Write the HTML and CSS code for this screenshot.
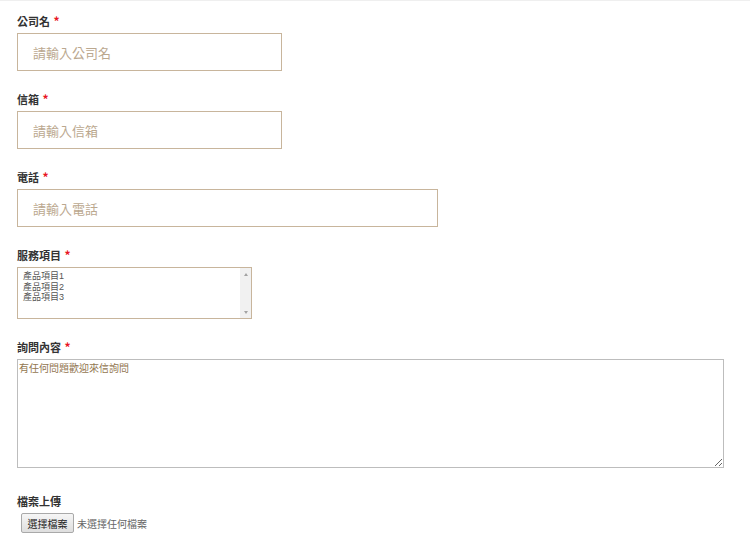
FILE: index.html
```html
<!DOCTYPE html>
<html lang="zh-Hant">
<head>
<meta charset="utf-8">
<title>聯絡表單</title>
<link rel="stylesheet" href="styles.css">
</head>
<body>
<form class="form">
  <div class="group">
    <label class="label">公司名 <span class="req">*</span></label>
    <input class="field field-sm" type="text" placeholder="請輸入公司名">
  </div>
  <div class="group">
    <label class="label">信箱 <span class="req">*</span></label>
    <input class="field field-sm" type="text" placeholder="請輸入信箱">
  </div>
  <div class="group">
    <label class="label">電話 <span class="req">*</span></label>
    <input class="field field-md" type="text" placeholder="請輸入電話">
  </div>
  <div class="group">
    <label class="label">服務項目 <span class="req">*</span></label>
    <div class="listbox">
      <ul class="options">
        <li>產品項目1</li>
        <li>產品項目2</li>
        <li>產品項目3</li>
      </ul>
      <div class="scrollbar">
        <span class="arrow arrow-up"></span>
        <span class="arrow arrow-down"></span>
      </div>
    </div>
  </div>
  <div class="group group-text">
    <label class="label">詢問內容 <span class="req">*</span></label>
    <textarea class="textarea">有任何問題歡迎來信詢問</textarea>
  </div>
  <div class="group">
    <label class="label">檔案上傳</label>
    <div class="file">
      <button type="button" class="file-btn">選擇檔案</button>
      <span class="file-name">未選擇任何檔案</span>
    </div>
  </div>
</form>
</body>
</html>
```

FILE: styles.css
```css
html, body {
  margin: 0;
  padding: 0;
  background: #fff;
}
body {
  border-top: 1px solid #efefef;
  font-family: "Liberation Sans", "Noto Sans CJK TC", sans-serif;
  color: #333;
}
.form {
  padding: 13px 17px 0 17px;
}
.group {
  margin-bottom: 21px;
}
.group-text {
  margin-bottom: 26px;
}
.label {
  display: block;
  font-size: 11px;
  font-weight: bold;
  line-height: 14px;
  height: 14px;
  margin-bottom: 5px;
  color: #333;
  font-family: "Noto Sans CJK TC", sans-serif;
}
.req {
  color: #e8171f;
  font-size: 12px;
  margin-left: 1px;
}
.field {
  display: block;
  box-sizing: border-box;
  height: 38px;
  border: 1px solid #c8b59c;
  border-radius: 0;
  padding: 0 15px;
  font-family: "Noto Sans CJK TC", sans-serif;
  font-size: 13px;
  color: #8a7355;
  background: #fff;
  outline: none;
}
.field::placeholder {
  color: #bba88f;
}
.field-sm { width: 265px; }
.field-md { width: 421px; }

.listbox {
  box-sizing: border-box;
  width: 235px;
  height: 52px;
  border: 1px solid #c8b59c;
  display: flex;
  background: #fff;
}
.options {
  list-style: none;
  margin: 0;
  padding: 3px 5px;
  flex: 1;
  font-family: "Liberation Sans", "Noto Sans CJK TC", sans-serif;
  font-size: 9px;
  line-height: 10.5px;
  color: #555;
}
.scrollbar {
  width: 11px;
  background: #f1f1f1;
  display: flex;
  flex-direction: column;
  justify-content: space-between;
  align-items: center;
  padding: 5px 0 4px;
}
.arrow {
  width: 0;
  height: 0;
  border-left: 2.5px solid transparent;
  border-right: 2.5px solid transparent;
}
.arrow-up { border-bottom: 3px solid #a3a3a3; }
.arrow-down { border-top: 3px solid #a3a3a3; }

.textarea {
  display: block;
  box-sizing: border-box;
  width: 707px;
  height: 109px;
  border: 1px solid #bdbdbd;
  padding: 2px 1px;
  margin: 0;
  font-family: "Noto Sans CJK TC", sans-serif;
  font-size: 10px;
  line-height: 12px;
  color: #92764f;
  resize: both;
  outline: none;
}

.file {
  display: flex;
  align-items: center;
  gap: 3px;
  padding-left: 4px;
  margin-top: 2px;
}
.file-btn {
  box-sizing: border-box;
  height: 20px;
  width: 53px;
  padding: 0;
  border: 1px solid #a9a9a9;
  border-radius: 2px;
  background: linear-gradient(#f6f6f6, #dedede);
  font-family: "Noto Sans CJK TC", sans-serif;
  font-size: 10px;
  color: #222;
}
.file-name {
  font-family: "Noto Sans CJK TC", sans-serif;
  font-size: 10px;
  color: #666;
}
```
